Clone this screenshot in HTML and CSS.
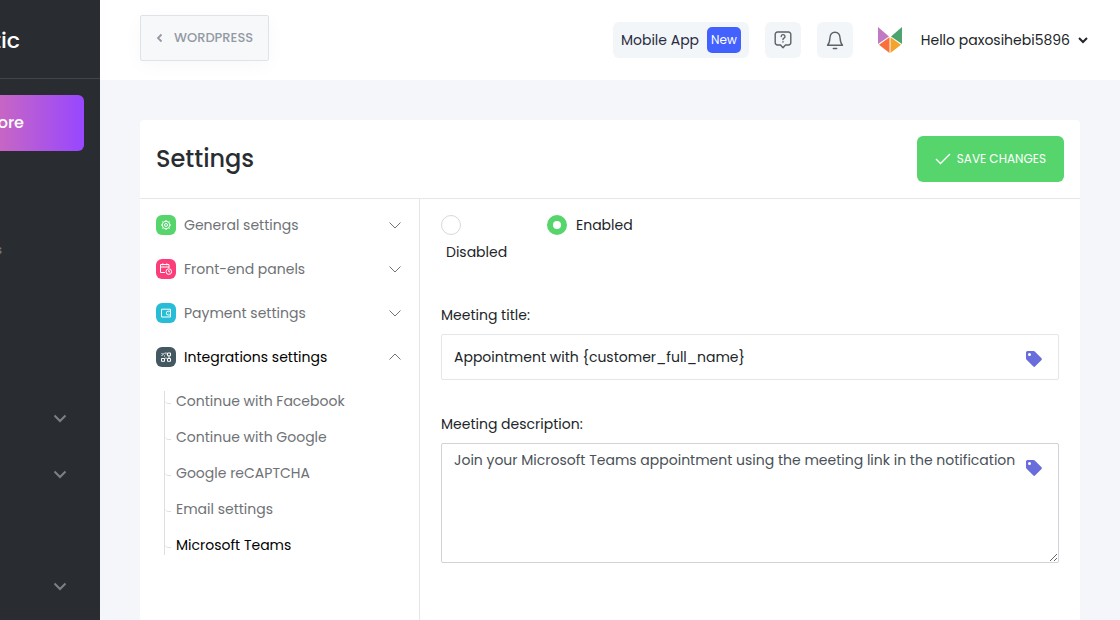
FILE: index.html
```html
<!DOCTYPE html>
<html lang="en">
<head>
  <meta charset="UTF-8">
  <title>Settings</title>
  <link rel="stylesheet" href="styles.css">
</head>
<body>
  <svg class="defs" width="0" height="0">
    <symbol id="chevron" viewBox="0 0 14 14"><path d="M1.500 4.500 7 10l5.500-5.500" fill="none" stroke="currentColor"/></symbol>
    <symbol id="tag" viewBox="0 0 16 16"><path fill-rule="evenodd" fill="currentColor" d="M0 1.500Q0 0 1.500 0H7.500Q8.200 0 8.800.6L15.500 7.300Q16.300 8.100 15.500 8.900L9 15.500Q8.200 16.300 7.400 15.500L.6 8.800Q0 8.200 0 7.500ZM3.500 2A1.500 1.500 0 1 0 3.500 5 1.500 1.500 0 1 0 3.500 2Z"/></symbol>
  </svg>
  <div class="layout">
    <aside class="sidebar">
      <div class="brand">tic</div>
      <button class="more">ore</button>
      <nav class="menu">
        <a class="menu-text" href="#">s</a>
        <button class="menu-toggle" aria-label="Expand"><svg><use href="#chevron"/></svg></button>
        <button class="menu-toggle" aria-label="Expand"><svg><use href="#chevron"/></svg></button>
        <span class="menu-space"></span>
        <button class="menu-toggle" aria-label="Expand"><svg><use href="#chevron"/></svg></button>
      </nav>
    </aside>
    <div class="page">
      <header class="topbar">
        <a class="back" href="#">
          <svg width="8" height="10" viewBox="0 0 8 10"><path d="M5.500 1.500 2 5l3.500 3.500" fill="none" stroke="currentColor" stroke-width="1.800"/></svg>
          WORDPRESS
        </a>
        <div class="tools">
          <a class="mobile" href="#">Mobile App <span class="new">New</span></a>
          <button class="tool" aria-label="Help">
            <svg width="20" height="20" viewBox="0 0 20 20" fill="none" stroke="currentColor" stroke-width="1.400" stroke-linejoin="round" stroke-linecap="round">
              <path d="M4.500 2h11a2.300 2.300 0 0 1 2.300 2.300v8.400a2.300 2.300 0 0 1-2.300 2.300h-3L10 17.800 7.500 15h-3a2.300 2.300 0 0 1-2.300-2.300V4.300A2.300 2.300 0 0 1 4.500 2Z"/>
              <path d="M8.200 6.500a1.900 1.900 0 1 1 2.800 1.700c-.7.400-1 .7-1 1.300M10 11.800v.2"/>
            </svg>
          </button>
          <button class="tool" aria-label="Notifications">
            <svg width="20" height="20" viewBox="0 0 20 20" fill="none" stroke="currentColor" stroke-width="1.400" stroke-linejoin="round" stroke-linecap="round">
              <path d="M2.500 15.200c1.800-1.800 2.200-3.700 2.400-7C5.100 4.500 7 2.300 10 2.300s4.900 2.200 5.100 5.900c.2 3.300.6 5.200 2.400 7ZM8.300 18.500h3.400"/>
            </svg>
          </button>
          <button class="user">
            <svg width="26" height="28" viewBox="0 0 26 28">
              <path fill="#c07ac4" d="M1 1 12 10.500 1 18Z"/>
              <path fill="#4ba36d" d="M25 1 14 10.500 25 18Z"/>
              <path fill="#f8703a" d="M12.500 11.200V27L2 18.800Z"/>
              <path fill="#f4a42c" d="M13.500 11.200V27L24 18.800Z"/>
            </svg>
            <span>Hello paxosihebi5896</span>
            <svg width="10" height="8" viewBox="0 0 10 8"><path d="m1 2 4 4 4-4" fill="none" stroke="currentColor" stroke-width="2"/></svg>
          </button>
        </div>
      </header>
      <main class="panel">
        <div class="panel-head">
          <h1>Settings</h1>
          <button class="save">
            <svg width="16" height="12" viewBox="0 0 16 12"><path d="m1 6 4.500 4.500L15 1" fill="none" stroke="currentColor" stroke-width="1.400"/></svg>
            SAVE CHANGES
          </button>
        </div>
        <div class="panel-body">
          <nav class="side">
            <a class="group" href="#">
              <span class="icon green"><svg viewBox="0 0 12 12"><circle cx="6" cy="6" r="3.800"/><circle cx="6" cy="6" r="1.500"/><path d="M6 1v1.200M6 9.800V11M1 6h1.200M9.800 6H11M2.500 2.500l.8.800M8.700 8.700l.8.800M2.500 9.500l.8-.8M8.700 3.300l.8-.8"/></svg></span>
              General settings
              <svg class="arrow"><use href="#chevron"/></svg>
            </a>
            <a class="group" href="#">
              <span class="icon pink"><svg viewBox="0 0 12 12"><path d="M5 9.500H.5v-8h8.500V5M.5 4H9M2.800.3v2M6.800.3v2"/><circle cx="8.800" cy="8.600" r="2.800"/><path d="M8.800 7v1.800h1.300"/></svg></span>
              Front-end panels
              <svg class="arrow"><use href="#chevron"/></svg>
            </a>
            <a class="group" href="#">
              <span class="icon cyan"><svg viewBox="0 0 12 12"><path d="M1.500 2.200h9v7.800h-9ZM10.500 4.200H8.200a1.900 1.900 0 0 0 0 3.800h2.300M8.300 6h.4"/></svg></span>
              Payment settings
              <svg class="arrow"><use href="#chevron"/></svg>
            </a>
            <a class="group active" href="#">
              <span class="icon slate"><svg viewBox="0 0 12 12"><path d="M7.500 2h3v2.800h-3ZM1.500 7.500h3v2.800h-3ZM7.500 7.500h3v2.800h-3ZM1.500 5l3.300-3.300M1.500 2.500h1M4 5h1M6 1.500v2M6 6.500v1.500M8 6h2"/></svg></span>
              Integrations settings
              <svg class="arrow up"><use href="#chevron"/></svg>
            </a>
            <ul class="sub">
              <li><a href="#">Continue with Facebook</a></li>
              <li><a href="#">Continue with Google</a></li>
              <li><a href="#">Google reCAPTCHA</a></li>
              <li><a href="#">Email settings</a></li>
              <li class="active"><a href="#">Microsoft Teams</a></li>
            </ul>
          </nav>
          <form class="content">
            <div class="radios">
              <div class="option narrow">
                <input type="radio" name="teams" id="off">
                <label for="off">Disabled</label>
              </div>
              <div class="option">
                <input type="radio" name="teams" id="on" checked>
                <label for="on">Enabled</label>
              </div>
            </div>
            <div class="field">
              <label for="title">Meeting title:</label>
              <div class="control">
                <input type="text" id="title" value="Appointment with {customer_full_name}">
                <button type="button" class="tag" aria-label="Insert keyword"><svg><use href="#tag"/></svg></button>
              </div>
            </div>
            <div class="field">
              <label for="desc">Meeting description:</label>
              <div class="control">
                <textarea id="desc">Join your Microsoft Teams appointment using the meeting link in the notification</textarea>
                <button type="button" class="tag" aria-label="Insert keyword"><svg><use href="#tag"/></svg></button>
              </div>
            </div>
          </form>
        </div>
      </main>
    </div>
  </div>
</body>
</html>
```
FILE: styles.css
```css
*{box-sizing: border-box;}
body{
  margin: 0;
  font-family: Poppins, Inter, sans-serif;
  font-size: 14px;
  line-height: 24px;
  color: #212529;
  background: #f4f6fa;
}
button, input, textarea{font: inherit;color: inherit;}
button{border: 0;padding: 0;background: none;cursor: pointer;}
a{color: inherit;text-decoration: none;}
svg{flex: none;}
.defs{position: absolute;}
.layout{
  display: flex;
  height: 100vh;
  overflow: hidden;
}

/* sidebar, slid to the left */
.sidebar{
  flex: none;
  width: 100px;
  overflow: hidden;
  background: #292d32;
  color: #fff;
}
.brand{
  display: flex;
  justify-content: flex-end;
  align-items: center;
  height: 79px;
  padding: 4px 80px 0 0;
  border-bottom: 1px solid #42464b;
  font-size: 22px;
  font-weight: 500;
}
.more{
  display: flex;
  justify-content: flex-end;
  align-items: center;
  width: 84px;
  height: 56px;
  margin-top: 16px;
  padding-right: 60px;
  border-radius: 0 6px 6px 0;
  background: linear-gradient(90deg, #c766c4, #9747ff);
  color: #fff;
  font-size: 16px;
  font-weight: 500;
}
.menu{
  display: flex;
  flex-direction: column;
  align-items: flex-end;
  padding-top: 87px;
  color: #7d8186;
}
.menu-text{
  height: 152px;
  padding-right: 98px;
  font-size: 13px;
}
.menu-toggle{
  display: flex;
  align-items: center;
  height: 56px;
  padding-right: 33px;
}
.menu-toggle svg{width: 14px;height: 14px;stroke-width: 2;}
.menu-space{height: 56px;}

.page{flex: 1;min-width: 0;}
.topbar{
  display: flex;
  justify-content: space-between;
  align-items: center;
  height: 80px;
  padding: 0 32px 0 40px;
  background: #fff;
}
.back{
  display: flex;
  align-items: center;
  gap: 10px;
  height: 46px;
  margin-bottom: 4px;
  padding: 0 15px;
  border: 1px solid #dfe3e7;
  border-radius: 2px;
  background: #f6f8fa;
  box-shadow: 0 4px 20px rgba(0, 0, 0, .03);
  color: #949aa2;
  font-size: 13px;
  font-weight: 500;
}
.tools{
  display: flex;
  align-items: center;
  gap: 16px;
}
.mobile, .tool{
  display: flex;
  align-items: center;
  height: 36px;
  border-radius: 6px;
  background: #f3f6f9;
}
.mobile{gap: 8px;padding: 0 8px;color: #292d42;}
.new{
  padding: 1px 4px;
  border-radius: 5px;
  background: #4361ff;
  color: #fff;
  font-size: 12px;
}
.tool{
  justify-content: center;
  width: 36px;
  color: #5d6268;
}
.user{
  display: flex;
  align-items: center;
  margin-left: 8px;
}
.user span{margin: 0 8px 0 18px;}

.panel{
  margin: 40px 40px 0;
  min-height: 100%;
  display: flex;
  flex-direction: column;
  border-radius: 4px;
  background: #fff;
}
.panel-head{
  display: flex;
  justify-content: space-between;
  align-items: center;
  padding: 16px;
  border-bottom: 1px solid #e3e7ea;
}
h1{
  margin: 0;
  font-size: 24px;
  font-weight: 500;
  color: #292d32;
}
.save{
  display: flex;
  align-items: center;
  gap: 6px;
  height: 46px;
  padding: 0 18px;
  border-radius: 6px;
  background: #55d56c;
  color: #fff;
  font-size: 12px;
}
.panel-body{display: flex;flex: 1;}
.side{
  flex: none;
  width: 280px;
  padding: 4px 16px;
  border-right: 1px solid #e3e7ea;
  color: #6f7276;
}
.side .active{color: #000;}
.group{
  display: flex;
  align-items: center;
  gap: 8px;
  height: 44px;
}
.arrow{
  width: 14px;
  height: 14px;
  margin: 0 1px 0 auto;
  color: #6f7276;
}
.arrow.up{transform: rotate(180deg);}
.icon{
  display: flex;
  align-items: center;
  justify-content: center;
  width: 20px;
  height: 20px;
  border-radius: 6px;
}
.icon svg{
  width: 12px;
  height: 12px;
  fill: none;
  stroke: #fff;
}
.green{background: #55d56c;}
.pink{background: #fb3e7a;}
.cyan{background: #27bdd6;}
.slate{background: #435861;}
.sub{
  margin: 12px 0 0 8px;
  padding: 0;
  list-style: none;
  border-left: 1px solid #dde0e3;
}
.sub li{
  display: flex;
  align-items: center;
  gap: 5px;
  height: 20px;
}
.sub li + li{margin-top: 16px;}
.sub li::before{
  content: "";
  width: 6px;
  height: 4px;
  border-bottom: 1px solid #dde0e3;
  border-bottom-left-radius: 4px;
}

.content{
  flex: 1;
  min-width: 0;
  padding: 14px 21px;
}
.radios{display: flex;}
.option{
  display: flex;
  flex-wrap: wrap;
  align-content: flex-start;
  align-items: center;
  gap: 3px 4px;
}
.option label{margin-left: 5px;}
.narrow{width: 106px;padding-right: 24px;}
.option input{
  appearance: none;
  width: 20px;
  height: 20px;
  margin: 2px 0;
  border: 1px solid #d5d9dc;
  border-radius: 50%;
  background: #fff;
}
.option input:checked{border: 6px solid #55d56c;}
.field{margin-top: 32px;}
.radios + .field{margin-top: 39px;}
.field > label{display: block;margin-bottom: 7px;}
.control{position: relative;}
.control input, .control textarea{
  display: block;
  width: 100%;
  height: 46px;
  padding: 0 12px;
  border: 1px solid #e3e7ea;
  border-radius: 2px;
  background: #fff;
}
.control textarea{
  height: 120px;
  padding: 4px 12px;
  border-color: #d0d4d8;
  color: #495057;
  white-space: pre;
  overflow: hidden;
  resize: both;
}
.tag{
  position: absolute;
  top: 10px;
  right: 13px;
  display: flex;
  align-items: center;
  justify-content: center;
  width: 24px;
  height: 30px;
  background: #fff;
  color: #696ddb;
}
.tag svg{width: 16px;height: 16px;}
```
